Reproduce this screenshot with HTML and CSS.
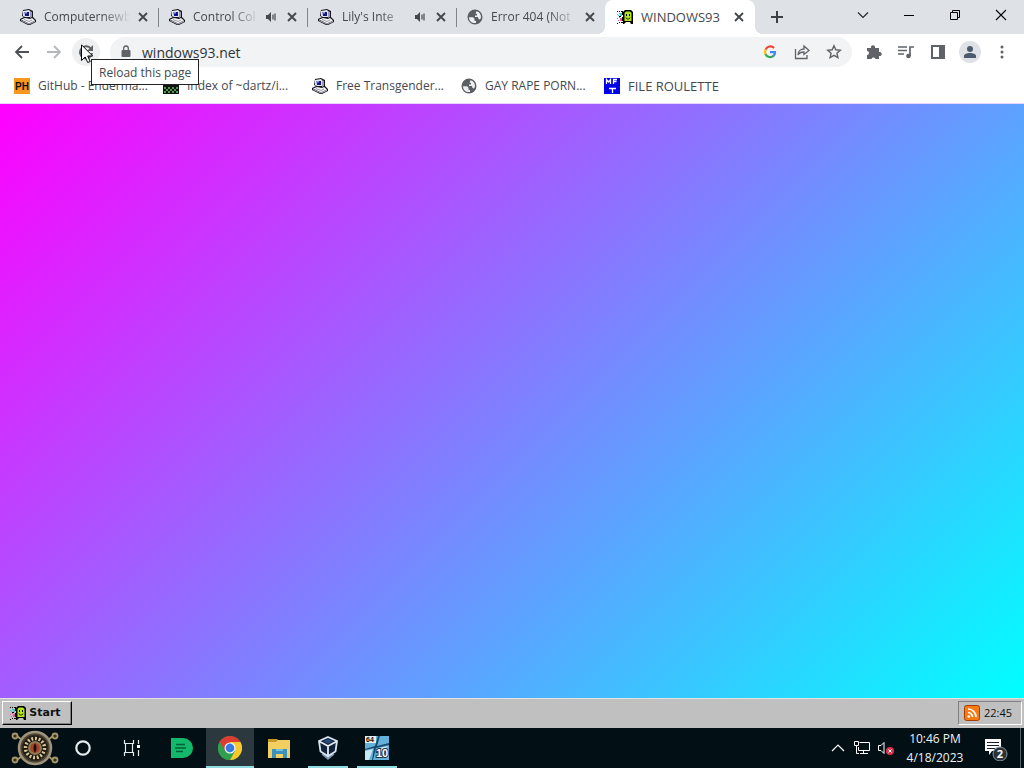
FILE: index.html
```html
<!DOCTYPE html>
<html lang="en">
<head>
<meta charset="utf-8">
<title>WINDOWS93</title>
<link rel="stylesheet" href="styles.css">
</head>
<body>
<svg class="sprite" aria-hidden="true">
  <symbol id="computer" viewBox="0 0 16 16">
    <path d="M3 1l6-1 4 2v6l3 3v2l-6 3H8L0 12v-2l4-2-2-1z" fill="#15151c"/>
    <path d="M3 2l6-1 1 1v6L5 8 3 7z" fill="#e4e4f0"/>
    <path d="M4.500 3H9v4H5z" fill="#14148c"/>
    <path d="M5 3h2v1.500H5z" fill="#8d9be8"/>
    <path d="M10 2l2 1v5l-2 1z" fill="#9a9ab0"/>
    <path d="M1 10.500L5 9l5 1 2-1 3 2.500-6 3z" fill="#f2f2f5"/>
    <path d="M1 11l8 3.500 6-3v1.500l-6 2.500-8-3.500z" fill="#a9a9b6"/>
    <path d="M4 10.500l5 2 3-1.500" fill="none" stroke="#77778a" stroke-width=".7"/>
  </symbol>
  <symbol id="globe" viewBox="0 0 16 16">
    <circle cx="8" cy="8" r="7.500" fill="#5b5f63"/>
    <path d="M2 8.200h4l1.500 1.500v2l1.500.3v2C5 14.500 2 12 2 8.200z" fill="#eceef1"/>
    <path d="M9.500 2.200c3 .8 4.700 3 4.500 6.300l-1 2-1.500-.5-.5-2H8V6.500h2V5l-1.500-.5z" fill="#eceef1"/>
  </symbol>
  <symbol id="flag" viewBox="0 0 16 16">
    <path d="M6 3l2-2h6l2 2v12h-2l-1-2H9l-2 2H6z" fill="#000"/>
    <path d="M9 2.500h4l1.500 1.500v8H7.500V4z" fill="#b5e61d"/>
    <path d="M9 5h1v2H9zm3 0h1v2h-1z" fill="#000"/><path d="M9 8.500c0 2 4 2 4 0" fill="none" stroke="#000" stroke-width=".9"/>
    <path d="M0 2h1v1H0zm2 0h1v1H2zm2 0h2v1H4zM0 14h1v1H0zm2-1h1v1H2zm2 0h2v1H4z" fill="#000"/>
    <path d="M0 5h1v1H0zm2-1h1v1H2zm1 0h2v3H3zM1 6h1v1H1z" fill="#38cdd4"/>
    <path d="M0 9h1v1H0zm2-1h1v1H2zm1 1h2v3H3zM1 11h1v1H1z" fill="#e850a8"/>
    <path d="M5 3h1v3H5zm0 5h1v4H5zM2 7h2v1H2z" fill="#000"/>
  </symbol>
  <symbol id="close" viewBox="0 0 16 16"><path d="M4 4l8 8m0-8l-8 8" fill="none" stroke="#45494d" stroke-width="1.900"/></symbol>
  <symbol id="sound" viewBox="0 0 16 16"><path d="M3 6h2l3-3v10l-3-3H3z" fill="#45494d"/><path d="M10 5.500v5M12 4.500v7" stroke="#45494d" stroke-width="1.200"/></symbol>
</svg>
<div class="desktop">
  <header class="browser">
    <div class="tabstrip">
      <div class="tab"><svg class="icon"><use href="#computer"/></svg><span class="tab-title">Computernewb</span><button class="tab-btn" aria-label="Close tab"><svg class="icon"><use href="#close"/></svg></button></div>
      <div class="tab"><svg class="icon"><use href="#computer"/></svg><span class="tab-title">Control Col</span><button class="tab-btn audio" aria-label="Mute tab"><svg class="icon"><use href="#sound"/></svg></button><button class="tab-btn" aria-label="Close tab"><svg class="icon"><use href="#close"/></svg></button></div>
      <div class="tab"><svg class="icon"><use href="#computer"/></svg><span class="tab-title">Lily's Inte</span><button class="tab-btn audio" aria-label="Mute tab"><svg class="icon"><use href="#sound"/></svg></button><button class="tab-btn" aria-label="Close tab"><svg class="icon"><use href="#close"/></svg></button></div>
      <div class="tab last"><svg class="icon"><use href="#globe"/></svg><span class="tab-title">Error 404 (Not</span><button class="tab-btn" aria-label="Close tab"><svg class="icon"><use href="#close"/></svg></button></div>
      <div class="tab active"><svg class="icon"><use href="#flag"/></svg><span class="tab-title full">WINDOWS93</span><button class="tab-btn" aria-label="Close tab"><svg class="icon"><use href="#close"/></svg></button></div>
      <button class="new-tab" aria-label="New tab"><svg class="icon" viewBox="0 0 16 16"><path d="M8 2v12M2 8h12" stroke="#3c4043" stroke-width="2"/></svg></button>
      <div class="window-controls">
        <button aria-label="Search tabs"><svg class="icon" viewBox="0 0 16 16"><path d="M3 5.500l5 5 5-5" fill="none" stroke="#222" stroke-width="1.100"/></svg></button>
        <button aria-label="Minimize"><svg class="icon" viewBox="0 0 16 16"><path d="M3 8.500h10" stroke="#000"/></svg></button>
        <button aria-label="Restore"><svg class="icon" viewBox="0 0 16 16"><path d="M3.500 5.500h7v7h-7zM5.500 5V3.500h7v7H11" fill="none" stroke="#000"/></svg></button>
        <button aria-label="Close"><svg class="icon" viewBox="0 0 16 16"><path d="M3 3l10 10M13 3L3 13" stroke="#000" stroke-width="1.100"/></svg></button>
      </div>
    </div>
    <div class="toolbar">
      <button class="nav" aria-label="Back"><svg class="icon" viewBox="0 0 16 16"><path d="M15 8H2m6-6L2 8l6 6" fill="none" stroke="#4d5155" stroke-width="1.800"/></svg></button>
      <button class="nav" aria-label="Forward"><svg class="icon" viewBox="0 0 16 16"><path d="M1 8h13M8 2l6 6-6 6" fill="none" stroke="#b5b7ba" stroke-width="1.800"/></svg></button>
      <div class="reload-wrap">
        <button class="nav reload" aria-label="Reload this page"><svg class="icon" viewBox="0 0 16 16"><path d="M13 5A6 6 0 1 0 14 9" fill="none" stroke="#5f6368" stroke-width="2"/><path d="M15 1v6H9z" fill="#5f6368"/></svg></button>
        <div class="tooltip" role="tooltip">Reload this page</div>
        <svg class="cursor" viewBox="0 0 12 19"><path d="M.5.800v15.700l3.700-3.500 2.500 5.500 2.500-1-2.500-5.500h5z" fill="#fff" stroke="#000"/></svg>
      </div>
      <div class="omnibox">
        <svg class="icon" viewBox="0 0 16 16"><path d="M4.500 6h7a1 1 0 0 1 1 1v5a1 1 0 0 1-1 1h-7a1 1 0 0 1-1-1V7a1 1 0 0 1 1-1z" fill="#5f6368"/><path d="M5.700 7V4.300a2.300 2.300 0 0 1 4.600 0V7" fill="none" stroke="#5f6368" stroke-width="1.300"/></svg>
        <input class="address" type="text" value="windows93.net" aria-label="Address">
        <button class="tool" aria-label="Google"><svg class="icon" viewBox="0 0 16 16" fill="none" stroke-width="2.200"><path d="M12 4A5.100 5.100 0 0 0 3.600 5.600" stroke="#ea4335"/><path d="M3.600 5.400a5.500 5.500 0 0 0 0 5" stroke="#fbbc05"/><path d="M3.500 10.200A5.100 5.100 0 0 0 11.700 11.600" stroke="#34a853"/><path d="M11.500 11.800A5 5 0 0 0 13 8.200H8" stroke="#4285f4"/></svg></button>
        <button class="tool" aria-label="Share"><svg class="icon" viewBox="0 0 16 16" fill="none" stroke="#5f6368" stroke-width="1.300"><path d="M1.500 5v9.500H13V11"/><path d="M4 11c0-4 3-6 6-6V2l5 4.500-5 4V8c-3 0-5 1-6 3z"/></svg></button>
        <button class="tool" aria-label="Bookmark this tab"><svg class="icon" viewBox="0 0 16 16"><path d="M8 1.800l1.800 4 4.500.4-3.400 3 1 4.400L8 11.300l-3.900 2.300 1-4.400-3.400-3 4.500-.4z" fill="none" stroke="#5f6368" stroke-width="1.400"/></svg></button>
      </div>
      <div class="actions">
        <button class="tool" aria-label="Extensions"><svg class="icon" viewBox="0 0 16 16"><path d="M1 4h4a2.100 2.100 0 1 1 4 0h4v4a2.100 2.100 0 1 1 0 4v3H9.500a2.100 2.100 0 0 0-4 0H1v-4a2 2 0 0 0 0-4z" fill="#5f6368"/></svg></button>
        <button class="tool" aria-label="Media controls"><svg class="icon" viewBox="0 0 16 16"><path d="M0 3h9M0 6.500h9M0 10h6M12 12V3h4" fill="none" stroke="#5f6368" stroke-width="1.700"/><circle cx="10.500" cy="12" r="2.300" fill="#5f6368"/></svg></button>
        <button class="tool" aria-label="Side panel"><svg class="icon" viewBox="0 0 16 16"><path d="M2 2h12v12H2z" fill="none" stroke="#5f6368" stroke-width="2"/><path d="M9 2h5v12H9z" fill="#5f6368"/></svg></button>
        <button class="tool avatar" aria-label="Profile"><svg class="icon" viewBox="0 0 16 16"><circle cx="8" cy="5" r="3" fill="#4d5a6c"/><path d="M2 14v-2c0-4 12-4 12 0v2z" fill="#4d5a6c"/></svg></button>
        <button class="tool" aria-label="Menu"><svg class="icon" viewBox="0 0 16 16" fill="#5f6368"><circle cx="8" cy="3" r="1.500"/><circle cx="8" cy="8" r="1.500"/><circle cx="8" cy="13" r="1.500"/></svg></button>
      </div>
    </div>
    <nav class="bookmarks" aria-label="Bookmarks">
      <a href="#"><svg class="icon" viewBox="0 0 16 16"><path d="M0 0h16v16H0z" fill="#f7971d"/><text class="ph" x="8" y="12" text-anchor="middle">PH</text></svg><span>GitHub - Enderma...</span></a>
      <a href="#"><svg class="icon" viewBox="0 0 16 16"><path d="M0 0h16v16H0z" fill="#111"/><path d="M2 3h4v4H2zm7 0h4v4H9z" fill="#ddd"/><path d="M1 9h2v2H1zm4 0h2v2H5zm4 0h2v2H9zm4 0h2v2h-2zM3 11h2v2H3zm4 0h2v2H7zm4 0h2v2h-2zM1 13h2v2H1zm4 0h2v2H5zm4 0h2v2H9zm4 0h2v2h-2z" fill="#4c9a4e"/></svg><span>Index of ~dartz/i...</span></a>
      <a href="#"><svg class="icon"><use href="#computer"/></svg><span>Free Transgender...</span></a>
      <a class="short" href="#"><svg class="icon"><use href="#globe"/></svg><span>GAY RAPE PORN...</span></a>
      <a href="#"><svg class="icon" viewBox="0 0 16 16"><path d="M0 0h16v16H0z" fill="#0000e8"/><path d="M2.500 6V1.500L4.500 4l2-2.500V6M9.500 6V1.500H13M9.500 3.500h3M5 10.500h7M8.500 10.500V15" fill="none" stroke="#fff" stroke-width="1.300"/></svg><span class="caps">FILE ROULETTE</span></a>
    </nav>
  </header>
  <main class="page"></main>
  <div class="retro-bar">
    <button class="start"><svg class="icon"><use href="#flag"/></svg>Start</button>
    <div class="retro-tray"><svg class="icon" viewBox="0 0 16 16"><rect x=".5" y=".5" width="15" height="15" rx="2" fill="#f47b16" stroke="#a63f00"/><g fill="none" stroke="#fff" stroke-width="1.700"><path d="M4 4a8 8 0 0 1 8 8M4 7.500A4.500 4.500 0 0 1 8.500 12"/></g><circle cx="4.800" cy="11.500" r="1.300" fill="#fff"/></svg><span>22:45</span></div>
  </div>
  <footer class="taskbar">
    <button class="orb" aria-label="Start"><svg viewBox="0 0 48 38"><g fill="#35301f" stroke="#a39768" stroke-width="1.800"><path d="M5 6l7 6M43 6l-7 6M5 32l7-6M43 32l-7-6"/><circle cx="4" cy="7" r="2.500"/><circle cx="44" cy="7" r="2.500"/><circle cx="4" cy="31" r="2.500"/><circle cx="44" cy="31" r="2.500"/></g><circle cx="24" cy="19" r="16" fill="#51483a" stroke="#a0957c" stroke-width="2.500"/><circle cx="24" cy="19" r="12.500" fill="#17120d" stroke="#30291e" stroke-width="1.500"/><circle cx="24" cy="19" r="9.500" fill="none" stroke="#d6c894" stroke-width="3.500" stroke-dasharray="2 1.700"/><circle cx="24" cy="19" r="7" fill="#8e7a52"/><circle cx="24" cy="19" r="4.800" fill="#a5422a"/><path d="M24 14c-2 3-2 7 0 10 2-3 2-7 0-10z" fill="#17100e"/></svg></button>
    <div class="apps">
      <button class="app" aria-label="Cortana"><svg viewBox="0 0 24 24"><circle cx="12" cy="12" r="6.700" fill="none" stroke="#e4eced" stroke-width="2.200"/></svg></button>
      <button class="app" aria-label="Task view"><svg viewBox="0 0 24 24"><path d="M4.500 4v3.500h9V4M4.500 20v-3.500h9V20M5.500 7.500v9M12.500 7.500v9M18.500 4v4M18.500 14v6" fill="none" stroke="#e4eced" stroke-width="1.200"/><path d="M17 9h3v3h-3z" fill="#fff"/></svg></button>
      <button class="app" aria-label="Notes"><svg viewBox="0 0 24 24"><path d="M2 2h12a10 10 0 0 1 0 20H2z" fill="#13b96b"/><path d="M7 8.500h9M6 12h11M7 15.500h7" stroke="#075c3b" stroke-width="1.600"/></svg></button>
      <button class="app current" aria-label="Chrome"><svg viewBox="0 0 24 24"><circle cx="12" cy="12" r="12" fill="#2fa04c"/><path d="M12 12L1.600 6A12 12 0 0 1 22.400 6z" fill="#dc3c31"/><path d="M12 6h10.400A12 12 0 0 1 12 24l5-9z" fill="#f8c92e"/><path d="M1.600 6L7 15l2-8z" fill="#dc3c31"/><path d="M1.600 6L7 15l4 2-1 7A12 12 0 0 1 1.600 6z" fill="#2fa04c"/><circle cx="12" cy="12" r="5.500" fill="#fff"/><circle cx="12" cy="12" r="4.400" fill="#377be0"/></svg></button>
      <button class="app" aria-label="File Explorer"><svg viewBox="0 0 24 24"><path d="M1 3h9l2 2h10v4H1z" fill="#c79822"/><path d="M1 6h8l2-2h12v18H1z" fill="#f3ce61"/><path d="M5 13h15v9h-4v-4H9v4H5z" fill="#3d92bd"/><path d="M9 13h7v2H9z" fill="#73c1dd"/></svg></button>
      <button class="app open" aria-label="VirtualBox"><svg viewBox="0 0 24 24"><path d="M6 18l6 5 6-5" fill="#9db0c2" stroke="#7895ae" stroke-width="1.500"/><path d="M12 1l9 4-1.500 10.500L12 20l-7.500-4.500L3 5z" fill="#10213b" stroke="#d9e5ef" stroke-width="1.800"/><path d="M3.500 5.500L12 10l8.500-4.500M12 10v9.500" fill="none" stroke="#e5edf4" stroke-width="1.800"/><path d="M7 5.300L12 3l5 2.300-5 2.500z" fill="#274a76"/></svg></button>
      <button class="app open" aria-label="Windows 10 64"><svg viewBox="0 0 24 24"><path d="M0 0h24v24H0z" fill="#17496f"/><path d="M0 0h13l-3 10-10 3zM15 0h9v7l-12 3zM0 14l9-2-2 12H0zM11 12l13-3v15H8z" fill="#64b2d9"/><path d="M0 15l8-2-4 11H0zM14 12l9-2-12 11z" fill="#c8e7f5"/><path d="M0 0h11v7H0z" fill="#e7eef0"/><text class="badge64" x="1" y="6">64</text><text class="badge10" x="11" y="21">10</text></svg></button>
    </div>
    <div class="tray">
      <button aria-label="Show hidden icons"><svg class="icon" viewBox="0 0 16 16"><path d="M2 11l6-6 6 6" fill="none" stroke="#fff" stroke-width="1.200"/></svg></button>
      <button class="network" aria-label="Network"><svg class="icon" viewBox="0 0 16 16" fill="none" stroke="#fff"><path d="M5.500 2.500h10v8H4.500V7M9.500 10.500v3M6 13.500h8M.5 1.500h4v4h-4zM2.500 5.500v8H5"/></svg></button>
      <button aria-label="Sound muted"><svg class="icon" viewBox="0 0 16 16"><path d="M.5 5.500H3l3-3v11l-3-3H.5z" fill="none" stroke="#fff"/><circle cx="12" cy="11" r="4" fill="#d9344e"/><path d="M10.500 9.500l3 3m0-3l-3 3" stroke="#fff"/></svg></button>
      <div class="clock"><span>10:46 PM</span><span>4/18/2023</span></div>
      <button class="notice" aria-label="2 notifications"><svg viewBox="0 0 26 26"><path d="M2 4h16v12H9l-3 4v-4H2z" fill="#fff"/><path d="M4 7.500h12M4 10.500h12M4 13.500h8" stroke="#17242b"/><circle cx="17" cy="19" r="7" fill="#29343a" stroke="#87969c"/><text class="count" x="17" y="23" text-anchor="middle">2</text></svg></button>
      <span class="peek"></span>
    </div>
  </footer>
</div>
</body>
</html>
```
FILE: styles.css
```css
* { box-sizing: border-box; }
body { margin: 0; font-family: "Open Sans", "Noto Sans", sans-serif; font-size: 12px; color: #45494d; }
button { margin: 0; padding: 0; border: 0; background: none; font: inherit; color: inherit; display: flex; align-items: center; justify-content: center; }
svg { display: block; flex: none; }
.sprite { width: 0; height: 0; position: absolute; }
.icon { width: 16px; height: 16px; }
.desktop { min-height: 100vh; display: flex; flex-direction: column; }
.browser { background: #fff; border-bottom: 1px solid #ecd3fb; }

.tabstrip { display: flex; height: 34px; padding-left: 9px; background: #dee1e6; }
.tab { flex: 0 1 149px; min-width: 0; display: flex; align-items: center; padding: 0 7px 0 11px; position: relative; }
.tab:not(.active):not(.last)::after { content: ""; position: absolute; right: -1px; top: 8px; width: 1px; height: 19px; background: #80868b; }
.tab.active { flex-basis: 150px; background: #fff; border-radius: 8px 8px 0 0; padding: 0 8px 0 12px; }
.tab.active::before, .tab.active::after { content: ""; position: absolute; bottom: 0; width: 8px; height: 8px; }
.tab.active::before { left: -8px; background: radial-gradient(circle at 0 0, transparent 8px, #fff 8px); }
.tab.active::after { right: -8px; background: radial-gradient(circle at 100% 0, transparent 8px, #fff 8px); }
.tab-title { flex: 1; min-width: 0; margin-left: 8px; overflow: hidden; white-space: nowrap; line-height: 20px; mask-image: linear-gradient(to right, #000 calc(100% - 28px), transparent); }
.tab-title.full { font-size: 13px; mask-image: none; }
.tab-btn { width: 16px; height: 16px; margin-left: 5px; }
.tab-btn.audio { margin-left: 4px; }
.new-tab { width: 28px; margin-left: 8px; }
.window-controls { margin-left: auto; display: flex; height: 29px; }
.window-controls button { width: 46px; }

.toolbar { display: flex; align-items: center; height: 36px; padding: 0 8px; }
.nav { width: 28px; height: 28px; border-radius: 14px; margin-right: 4px; }
.reload-wrap { position: relative; padding-right: 6px; }
.reload { background: #eeeff0; }
.tooltip { position: absolute; z-index: 2; left: 19px; top: 21px; padding: 0 7px; height: 26px; line-height: 25px; background: #fff; border: 1px solid #222; white-space: nowrap; }
.cursor { position: absolute; z-index: 3; left: 9px; top: 6px; width: 12px; height: 19px; }
.omnibox { flex: 1; min-width: 0; display: flex; align-items: center; height: 30px; padding: 0 8px; background: #f1f3f4; border-radius: 15px; }
.address { flex: 1; min-width: 0; margin-left: 8px; padding: 0; border: 0; background: none; font: 14px "Open Sans", sans-serif; color: #303336; }
.tool { width: 32px; height: 28px; }
.omnibox .tool:last-child { width: 20px; margin-left: 6px; }
.actions { display: flex; align-items: center; padding-left: 6px; }
.avatar { width: 22px; height: 22px; margin: 0 5px; border-radius: 11px; background: #dee1e6; }
.actions .tool:last-child { margin-right: -2px; }

.bookmarks { display: flex; align-items: center; height: 33px; padding: 0 14px 2px; }
.bookmarks a { display: flex; align-items: center; gap: 8px; flex: 0 0 149px; color: inherit; text-decoration: none; white-space: nowrap; }
.bookmarks a.short { flex-basis: 143px; }
.bookmarks .caps { font-size: 13px; }
.ph { font: bold 10px "Liberation Sans", sans-serif; fill: #111; }

.page { flex: 1; background: linear-gradient(135deg, #f0f, #0ff); }

.retro-bar { display: flex; align-items: center; justify-content: space-between; height: 30px; padding: 0 2px 2px; background: #c0c0c0; border-top: 1px solid #e4e4e4; color: #111; }
.start { width: 70px; height: 24px; gap: 3px; padding-right: 3px; border: 1px solid; border-color: #fff #000 #000 #fff; box-shadow: inset -1px -1px #808080; font: bold 11px "DejaVu Sans", sans-serif; }
.retro-tray { display: flex; align-items: center; gap: 4px; width: 64px; height: 24px; padding-left: 5px; border: 1px solid; border-color: #808080 #fff #fff #808080; font-size: 11px; }

.taskbar { display: flex; height: 40px; background: #020f14; color: #eef3f4; }
.orb { width: 59px; padding-left: 10px; }
.orb svg { width: 48px; height: 38px; }
.apps { display: flex; gap: 1px; }
.app { width: 48px; position: relative; }
.app svg { width: 24px; height: 24px; }
.app.current { background: #2b383d; }
.app.current::after, .app.open::after { content: ""; position: absolute; left: 0; right: 0; bottom: 0; height: 2px; background: #91dce0; }
.app.open::after { left: 4px; right: 4px; }
.tray { display: flex; margin-left: auto; }
.tray button { width: 24px; }
.clock { display: flex; flex-direction: column; justify-content: center; align-items: center; width: 74px; line-height: 19px; font-size: 12px; }
.tray .notice { width: 48px; }
.notice svg { width: 26px; height: 26px; }
.peek { width: 4px; border-left: 1px solid #566267; }
.badge64 { font: bold 7px "Liberation Sans", sans-serif; fill: #111; }
.badge10 { font: bold 11px "Liberation Sans", sans-serif; fill: #fff; stroke: #234; stroke-width: 2px; paint-order: stroke; }
.count { font: bold 11px "Open Sans", sans-serif; fill: #fff; }
```
